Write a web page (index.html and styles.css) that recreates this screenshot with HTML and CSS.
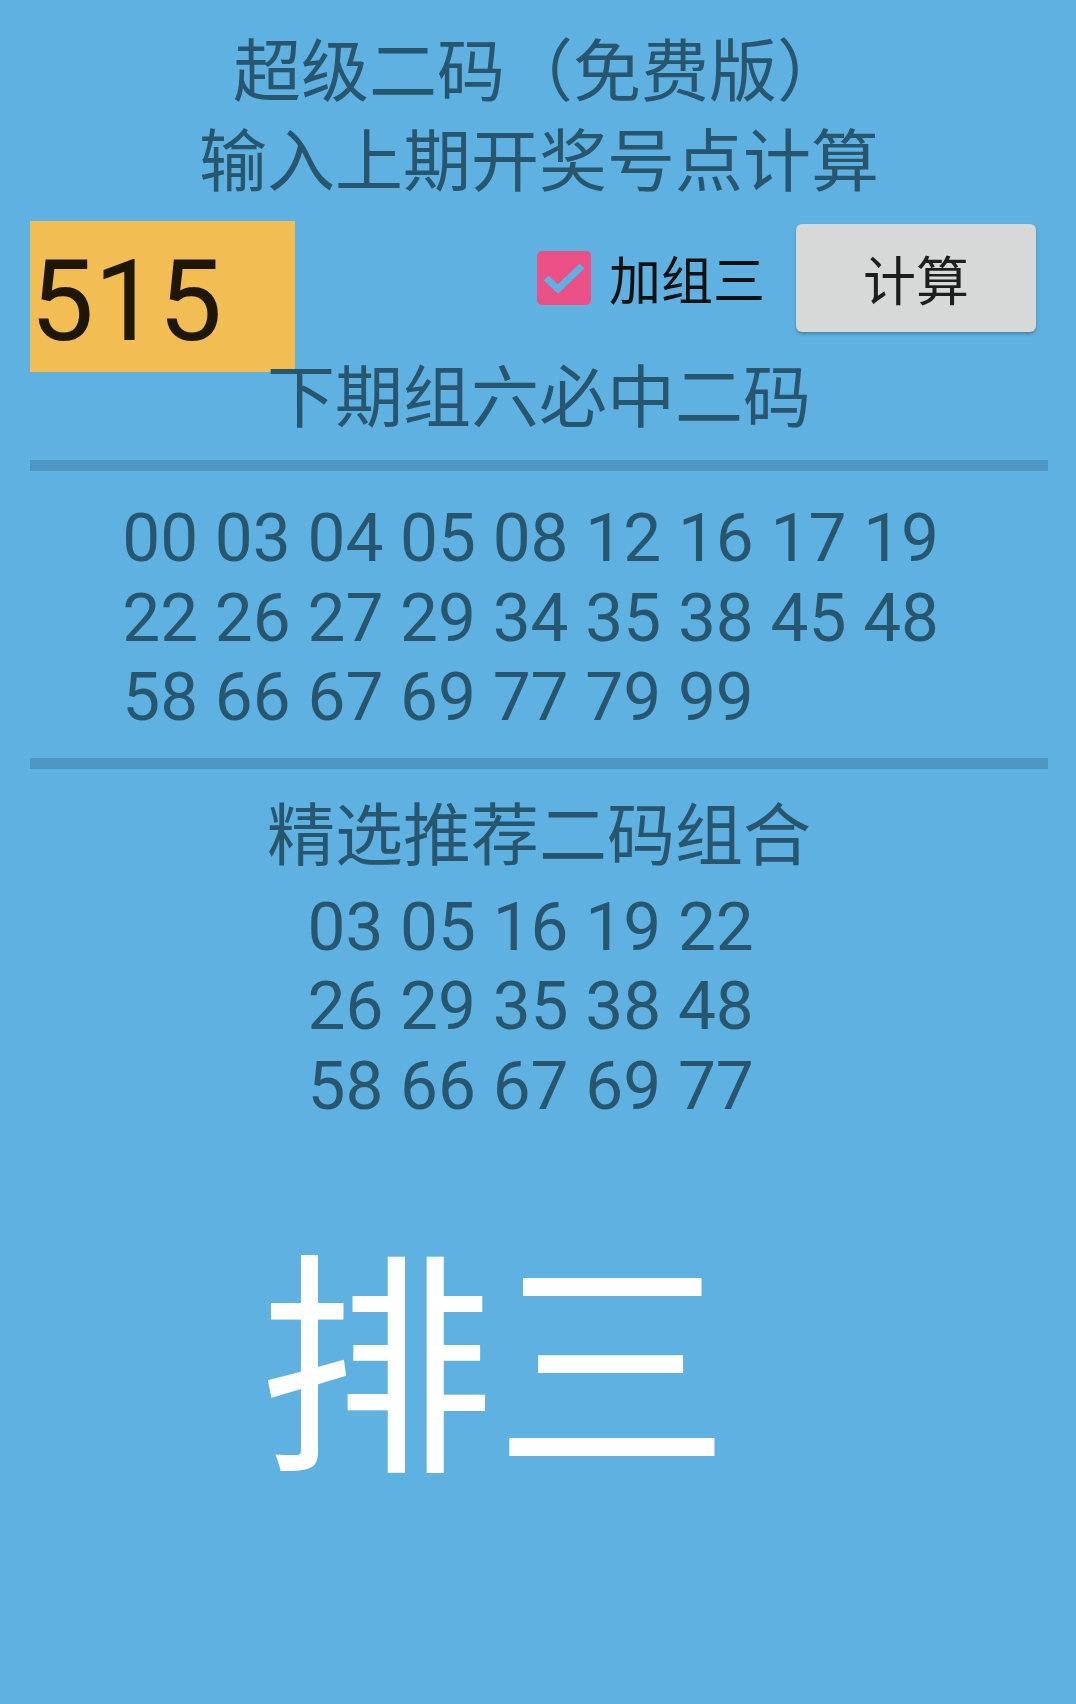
FILE: index.html
```html
<!DOCTYPE html>
<html lang="zh-CN">
  <head>
    <meta charset="utf-8">
    <meta name="viewport" content="width=device-width, initial-scale=1">
    <title>超级二码</title>
    <link rel="stylesheet" href="styles.css">
  </head>
  <body>
    <div class="screen">
      <h1 class="title">超级二码（免费版）<br>输入上期开奖号点计算</h1>

      <div class="inputRow">
        <div class="lastDraw">515</div>
        <div class="controls">
          <label class="group3">
            <span class="checkBox">
              <svg width="54" height="54" viewBox="0 0 54 54">
                <rect x="0" y="0" width="54" height="54" rx="5" fill="#ea4f85"/>
                <polyline points="9,27 21,38 45,15" fill="none" stroke="#5eb1e0" stroke-width="7"/>
              </svg>
            </span>
            加组三
          </label>
          <button class="calcButton">计算</button>
        </div>
      </div>

      <h2 class="heading">下期组六必中二码</h2>
      <div class="rule"></div>
      <p class="codes">00 03 04 05 08 12 16 17 19 
22 26 27 29 34 35 38 45 48 
58 66 67 69 77 79 99 </p>
      <div class="rule second"></div>

      <h2 class="heading second">精选推荐二码组合</h2>
      <p class="codes picks">03 05 16 19 22 
26 29 35 38 48 
58 66 67 69 77 </p>

      <div class="brand">排三</div>
    </div>
  </body>
</html>
```

FILE: styles.css
```css
body {
  margin: 0;
  background: #5eb1e0;
  color: #29566f;
  font-family: "Noto Sans CJK SC", Roboto, sans-serif;
}

.screen {
  min-height: 1704px;
  padding: 22px 28px 0 30px;
  box-sizing: border-box;
}

.title {
  margin: 0;
  font-size: 68px;
  font-weight: normal;
  line-height: 90px;
  text-align: center;
}

.inputRow {
  display: flex;
  justify-content: space-between;
  align-items: flex-start;
  margin-top: 19px;
}

.lastDraw {
  width: 265px;
  height: 151px;
  box-sizing: border-box;
  padding-top: 10px;
  background: #f2bd52;
  color: #1e1606;
  font-family: Roboto, sans-serif;
  font-size: 114px;
  line-height: 141px;
}

.controls {
  display: flex;
  align-items: center;
  margin-top: 3px;
  margin-right: 12px;
}

.group3 {
  display: flex;
  align-items: center;
  color: #111;
  font-size: 52px;
  line-height: 60px;
}

.checkBox {
  display: block;
  width: 54px;
  height: 54px;
  margin-right: 18px;
}

.checkBox svg {
  display: block;
}

.calcButton {
  width: 240px;
  height: 108px;
  margin-left: 31px;
  border: none;
  border-radius: 6px;
  background: #d7d8d8;
  box-shadow: 0 2px 3px rgba(0, 0, 0, 0.25);
  color: #1e1e1e;
  font-family: "Noto Sans CJK SC", sans-serif;
  font-size: 53px;
  cursor: pointer;
}

.heading {
  margin: 0;
  font-size: 68px;
  font-weight: normal;
  line-height: 42px;
  text-align: center;
}

.heading.second {
  margin-top: 41px;
}

.rule {
  height: 11px;
  margin-top: 46px;
  background: #4f97c3;
}

.rule.second {
  margin-top: 21px;
}

.codes {
  width: fit-content;
  margin: 27px auto 0;
  font-family: Roboto, sans-serif;
  font-size: 67.5px;
  line-height: 79.5px;
  white-space: pre;
}

.codes.picks {
  margin-top: 35px;
}

.brand {
  margin-top: 108px;
  padding-right: 90px;
  color: #fff;
  font-size: 236px;
  line-height: 236px;
  text-align: center;
}
```
